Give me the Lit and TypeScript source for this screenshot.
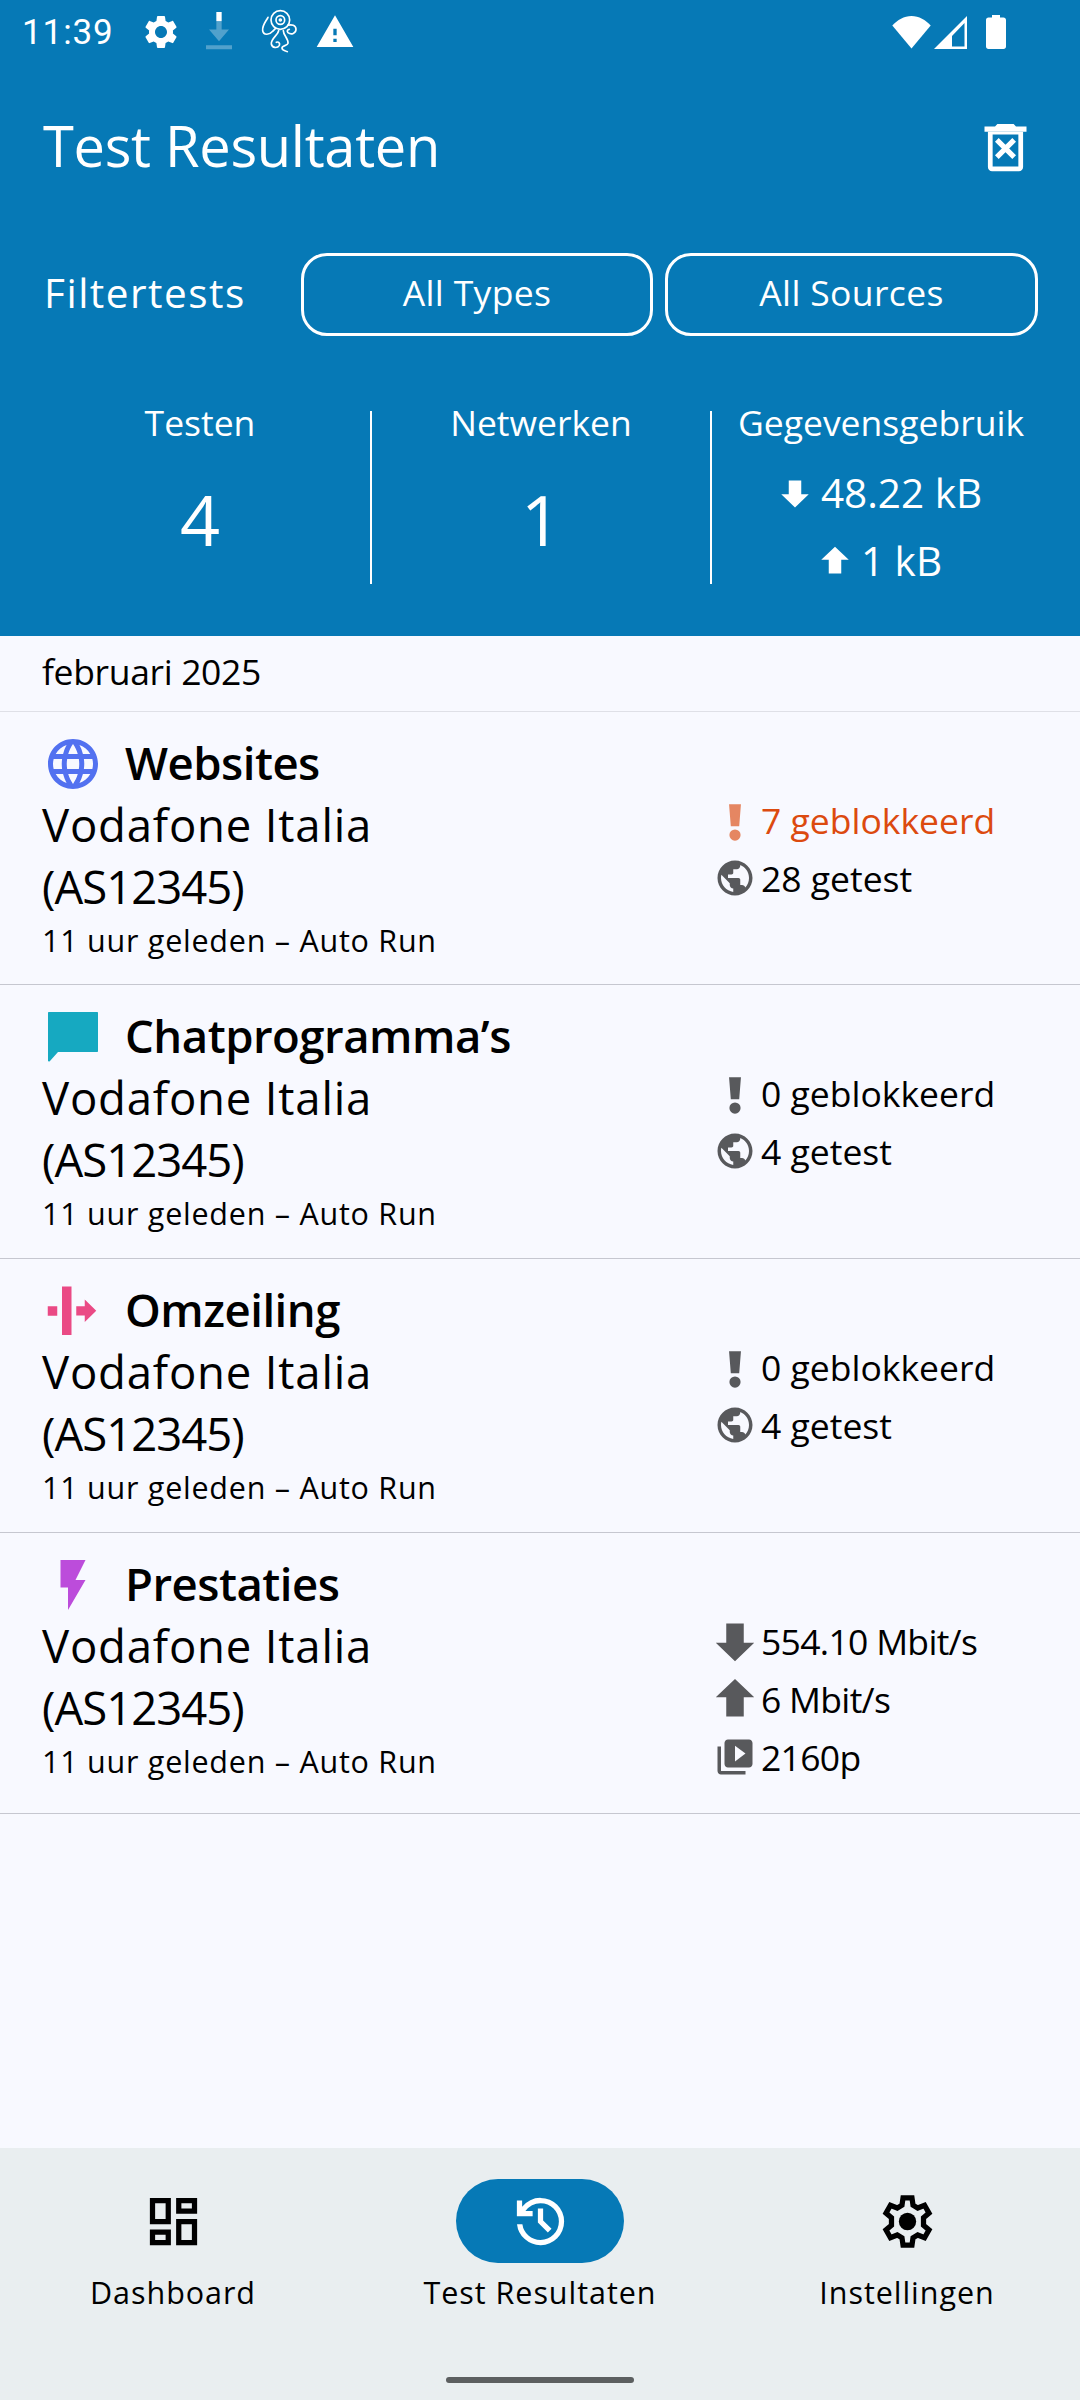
import { LitElement, html, css, svg } from 'lit';
import { customElement } from 'lit/decorators.js';

const P_GEAR = 'M19.14 12.94c.04-.3.06-.61.06-.94 0-.32-.02-.64-.07-.94l2.03-1.58c.18-.14.23-.41.12-.61l-1.92-3.32c-.12-.22-.37-.29-.59-.22l-2.39.96c-.5-.38-1.03-.7-1.62-.94l-.36-2.54c-.04-.24-.24-.41-.48-.41h-3.84c-.24 0-.43.17-.47.41l-.36 2.54c-.59.24-1.13.57-1.62.94l-2.39-.96c-.22-.08-.47 0-.59.22L2.74 8.87c-.12.21-.08.47.12.61l2.03 1.58c-.05.3-.09.63-.09.94s.02.64.07.94l-2.03 1.58c-.18.14-.23.41-.12.61l1.92 3.32c.12.22.37.29.59.22l2.39-.96c.5.38 1.03.7 1.62.94l.36 2.54c.05.24.24.41.48.41h3.84c.24 0 .44-.17.47-.41l.36-2.54c.59-.24 1.13-.56 1.62-.94l2.39.96c.22.08.47 0 .59-.22l1.92-3.32c.12-.22.07-.47-.12-.61l-2.01-1.58zM12 15.6c-1.98 0-3.6-1.62-3.6-3.6s1.62-3.6 3.6-3.6 3.6 1.62 3.6 3.6-1.62 3.6-3.6 3.6z';
const P_DASH = 'M19 5v2h-4V5h4M9 5v6H5V5h4m10 8v6h-4v-6h4M9 17v2H5v-2h4M21 3h-8v6h8V3zM11 3H3v10h8V3zm10 8h-8v10h8V11zm-10 4H3v6h8v-6z';
const P_HISTORY = 'M12 21q-3.45 0-6.01-2.29T3.05 13H5.1q.35 2.6 2.31 4.3T12 19q2.93 0 4.96-2.04T19 12t-2.04-4.96T12 5q-1.73 0-3.23.8T6.25 8H9v2H3V4h2v2.35q1.28-1.6 3.11-2.48T12 3q1.88 0 3.51.71t2.86 1.93 1.93 2.86T21 12t-.71 3.51-1.93 2.86-2.86 1.93T12 21zm2.8-4.8L11 12.4V7h2v4.6l3.2 3.2-1.4 1.4z';
const P_LANGUAGE = 'M11.99 2C6.47 2 2 6.48 2 12s4.47 10 9.99 10C17.52 22 22 17.52 22 12S17.52 2 11.99 2zm6.93 6h-2.95c-.32-1.25-.78-2.45-1.38-3.56 1.84.63 3.37 1.91 4.33 3.56zM12 4.04c.83 1.2 1.48 2.53 1.91 3.96h-3.82c.43-1.43 1.08-2.76 1.91-3.96zM4.26 14C4.1 13.36 4 12.69 4 12s.1-1.36.26-2h3.38c-.08.66-.14 1.32-.14 2 0 .68.06 1.34.14 2H4.26zm.82 2h2.95c.32 1.25.78 2.45 1.38 3.56-1.84-.63-3.37-1.9-4.33-3.56zm2.95-8H5.08c.96-1.66 2.49-2.93 4.33-3.56C8.81 5.55 8.35 6.75 8.03 8zM12 19.96c-.83-1.2-1.48-2.53-1.91-3.96h3.82c-.43 1.43-1.08 2.76-1.91 3.96zM14.34 14H9.66c-.09-.66-.16-1.32-.16-2 0-.68.07-1.35.16-2h4.68c.09.65.16 1.32.16 2 0 .68-.07 1.34-.16 2zm.25 5.56c.6-1.11 1.06-2.31 1.38-3.56h2.95c-.96 1.65-2.49 2.93-4.33 3.56zM16.36 14c.08-.66.14-1.32.14-2 0-.68-.06-1.34-.14-2h3.38c.16.64.26 1.31.26 2s-.1 1.36-.26 2h-3.38z';
const P_PUBLIC = 'M12 2C6.48 2 2 6.48 2 12s4.48 10 10 10 10-4.48 10-10S17.52 2 12 2zm-1 17.93c-3.95-.49-7-3.85-7-7.93 0-.62.08-1.21.21-1.79L9 15v1c0 1.1.9 2 2 2v1.93zm6.9-2.54c-.26-.81-1-1.39-1.9-1.39h-1v-3c0-.55-.45-1-1-1H8v-2h2c.55 0 1-.45 1-1V7h2c1.1 0 2-.9 2-2v-.41c2.93 1.19 5 4.06 5 7.41 0 2.08-.8 3.97-2.1 5.39z';
const P_VIDEO = 'M4 6H2v14c0 1.1.9 2 2 2h14v-2H4V6zm16-4H8c-1.1 0-2 .9-2 2v12c0 1.1.9 2 2 2h12c1.1 0 2-.9 2-2V4c0-1.1-.9-2-2-2zm-8 12.5v-9l6 4.5-6 4.5z';
const P_DOWN = 'M7 2h10v11h6L12 23.5 1 13h6z';
const P_UP = 'M7 22h10V11h6L12 .5 1 11h6z';
const P_BANG = 'M8.6 3h6.800l-1 12.600H9.600zM12 17.400a3.200 3.200 0 1 0 0 6.400 3.200 3.200 0 0 0 0-6.400z';

type Stat = { icon: string; text: string };
type Row = { title: string; kind: string; color: string; alert?: boolean; stats: Stat[] };

const blocked = (n: number) => ({ icon: P_BANG, text: `${n} geblokkeerd` });
const tested = (n: number) => ({ icon: P_PUBLIC, text: `${n} getest` });

const ROWS: Row[] = [
  { title: 'Websites', kind: 'web', color: '#5271f0', alert: true, stats: [blocked(7), tested(28)] },
  { title: 'Chatprogramma’s', kind: 'chat', color: '#16a9c1', stats: [blocked(0), tested(4)] },
  { title: 'Omzeiling', kind: 'circ', color: '#ea4a85', stats: [blocked(0), tested(4)] },
  {
    title: 'Prestaties', kind: 'perf', color: '#bc4cdb',
    stats: [
      { icon: P_DOWN, text: '554.10 Mbit/s' },
      { icon: P_UP, text: '6 Mbit/s' },
      { icon: P_VIDEO, text: '2160p' },
    ],
  },
];

const icon = (d: string, cls = '') =>
  html`<svg class=${cls} viewBox="0 0 24 24" fill="currentColor"><path d=${d}></path></svg>`;

const TYPE_ICONS: Record<string, ReturnType<typeof svg>> = {
  web: svg`<path d=${P_LANGUAGE}></path>`,
  chat: svg`<path d="M2.300 2h19.400c.2 0 .3.1.3.3v15.400c0 .2-.1.3-.3.3H6l-3.300 3.700c-.3.3-.7.1-.7-.2V2.300c0-.2.1-.3.3-.3z"></path>`,
  circ: svg`<path d="M1.900 10.100h3.800v3.800H1.900zM7.600 2.200h3.800v19.400H7.600zM13.300 10.100h3.400V7.400l4.600 4.500-4.600 4.500v-2.600h-3.400z"></path>`,
  perf: svg`<path d="M7 2v11h3v9l7-12h-4l4-8z"></path>`,
};

const GEAR_OUTLINE = html`
  <svg viewBox="0 0 24 24" fill="none" stroke="currentColor" stroke-width="2">
    <polygon points="10.300,3 13.700,3 14.100,5.800 15.900,6.850 18.500,5.800 20.200,8.800 18.100,10.600 18.100,13.400 20.200,15.200 18.500,18.200 15.900,17.150 14.100,18.200 13.700,21 10.300,21 9.900,18.200 8.100,17.150 5.500,18.200 3.800,15.200 5.900,13.400 5.900,10.600 3.800,8.800 5.500,5.800 8.100,6.850 9.900,5.800"></polygon>
    <circle cx="12" cy="12" r="3.300" fill="currentColor" stroke="none"></circle>
  </svg>`;

@customElement('app-root')
export class AppRoot extends LitElement {
  static styles = css`
    :host {
      display: flex;
      flex-direction: column;
      width: 1080px;
      height: 2400px;
      overflow: hidden;
      background: #f8f9ff;
      font-family: "Open Sans", "Noto Sans", sans-serif;
      color: #000;
    }

    svg { display: block; flex-shrink: 0; }

    /* === Header === */
    .header { background: #0679b6; color: #fff; height: 636px; box-sizing: border-box; flex-shrink: 0; }

    .status {
      display: flex;
      align-items: center;
      height: 64px;
      padding: 0 74px 0 22px;
      gap: 18px;
    }
    .status svg { width: 40px; height: 40px; }
    .time {
      font-family: Roboto, sans-serif;
      font-size: 35px;
      width: 90px;
      margin-right: 11px;
      letter-spacing: 0.9px;
    }
    .status .octo { width: 40px; height: 50px; margin-top: -4px; }
    .status-right { display: flex; align-items: center; margin-left: auto; }
    .status .wifi { width: 39px; height: 34px; }
    .status .sig { width: 33px; height: 33px; margin-left: 3px; }
    .status .bat { width: 20px; height: 34px; margin-left: 19px; }

    .title-row {
      display: flex;
      align-items: center;
      justify-content: space-between;
      height: 164px;
      padding: 0 43px 0 43px;
      box-sizing: border-box;
    }
    .title { font-size: 56px; letter-spacing: -0.3px; margin-top: -2px; }
    .trash { width: 63px; height: 63px; margin-top: 2px; }

    .filter {
      display: flex;
      align-items: center;
      height: 83px;
      margin-top: 25px;
      padding: 0 42px 0 44px;
    }
    .filter-label { font-size: 40.5px; width: 257px; letter-spacing: 1.5px; padding-bottom: 4px; }
    .pill {
      display: flex;
      align-items: center;
      justify-content: center;
      box-sizing: border-box;
      height: 83px;
      padding-bottom: 6px;
      border: 3px solid #fff;
      border-radius: 26px;
      font-size: 35.5px;
      letter-spacing: 0.35px;
    }
    .pill.types { width: 352px; margin-right: 12px; }
    .pill.sources { width: 373px; }

    .stats {
      display: grid;
      grid-template-columns: repeat(3, 340px);
      grid-template-rows: 173px;
      margin: 75px 30px 0;
    }
    .stat {
      display: flex;
      flex-direction: column;
      align-items: center;
      min-height: 0;
      border-left: 2px solid #fff;
    }
    .stat:first-child { border-left: 0; }
    .stat-label { font-size: 35.5px; line-height: 32px; margin-top: -5px; }
    .stat-num { font-size: 70px; line-height: 72px; margin-top: 45px; }
    .data {
      display: flex;
      align-items: center;
      flex-shrink: 0;
      gap: 11px;
      font-size: 40.5px;
      line-height: 68px;
    }
    .data svg { width: 30px; height: 30px; }
    .data.first { margin-top: 21px; }

    /* === List === */
    .month {
      height: 75px;
      line-height: 71px;
      padding-left: 42px;
      font-size: 35.5px;
      letter-spacing: -0.35px;
      border-bottom: 1px solid #dfe0e7;
      flex-shrink: 0;
    }
    .list { flex: 1; }
    .row {
      display: flex;
      justify-content: space-between;
      padding: 0 42px;
      min-height: 274px;
      box-sizing: border-box;
      border-bottom: 1.5px solid #c6c7d0;
    }
    .row:first-child { min-height: 273px; }
    .row-head { display: flex; align-items: center; height: 60px; margin-top: 22px; }
    .row-head svg { width: 60px; height: 60px; margin-left: 1px; }
    .row-title { font-size: 45.5px; font-weight: 600; margin: -4px 0 0 22px; letter-spacing: -0.5px; }
    .net { font-size: 45.5px; line-height: 62px; width: 400px; margin-top: -1px; letter-spacing: 0.8px; }
    .asn { letter-spacing: -1px; }
    .ago { font-size: 30.5px; line-height: 40px; letter-spacing: 0.75px; margin-top: 3px; }
    .right { width: 324px; padding: 79px 0 26.5px; }
    .line { display: flex; align-items: center; height: 58px; font-size: 35.5px; gap: 5px; }
    .line svg { width: 42px; height: 42px; color: #58595c; }
    .right.perf .line { letter-spacing: -0.7px; }
    .right.alert .line:first-child { color: #dc4a0f; }
    .right.alert .line:first-child svg { color: #dc4a0f; opacity: 0.65; }

    /* === Bottom nav === */
    .nav { background: #e9eef0; height: 252px; flex-shrink: 0; }
    .tabs { display: flex; justify-content: space-between; padding: 31px 73px 0; }
    .tab { display: flex; flex-direction: column; align-items: center; width: 240px; }
    .tab:first-child { margin-left: -20px; }
    .tab:last-child { margin-right: -20px; }
    .tab-icon {
      display: flex;
      align-items: center;
      justify-content: center;
      width: 168px;
      height: 84px;
      border-radius: 42px;
    }
    .tab-icon svg { width: 63px; height: 63px; }
    .tab.active .tab-icon { background: #0679b6; color: #fff; }
    .tab-label { font-size: 30.5px; line-height: 40px; margin-top: 9px; letter-spacing: 0.95px; }
    .home {
      width: 188px;
      height: 6px;
      margin: 65px auto 0;
      border-radius: 3px;
      background: #5c5f60;
    }
  `;

  private renderRow(r: Row) {
    const cls = `right ${r.alert ? 'alert' : ''} ${r.kind === 'perf' ? 'perf' : ''}`;
    return html`
      <div class="row">
        <div>
          <div class="row-head">
            <svg viewBox="0 0 24 24" fill=${r.color}>${TYPE_ICONS[r.kind]}</svg>
            <div class="row-title">${r.title}</div>
          </div>
          <div class="net">Vodafone Italia <span class="asn">(AS12345)</span></div>
          <div class="ago">11 uur geleden – Auto Run</div>
        </div>
        <div class=${cls}>
          ${r.stats.map((s) => html`<div class="line">${icon(s.icon)}<span>${s.text}</span></div>`)}
        </div>
      </div>
    `;
  }

  render() {
    return html`
      <div class="header">
        <div class="status">
          <span class="time">11:39</span>
          ${icon(P_GEAR)}
          <svg viewBox="0 0 24 24" fill="#fff">
            <path d="M10.400 -1h3.200v6.500h-3.200z"></path>
            <path opacity=".3" d="M10.400 5.500h3.200v5h4.400L12 17.600 6 10.500h4.400zM4.200 20h15.600v2.400H4.200z"></path>
          </svg>
          <svg class="octo" viewBox="45 15 120 150" fill="none" stroke="#fff" stroke-width="5" stroke-linecap="round">
            <circle cx="115" cy="60" r="28"></circle>
            <circle cx="115" cy="60" r="13"></circle>
            <circle cx="115" cy="60" r="3"></circle>
            <path d="M78 52c-6 12-18 24-16 40 2 14 20 14 30 2l8-8"></path>
            <path d="M138 76c10-4 24 0 24 12 0 12-14 18-24 10-4-4-2-10 4-10"></path>
            <path d="M110 92c-2 14-24 24-22 40 2 12 18 14 24 4 3-7-3-12-9-9"></path>
            <path d="M124 92c0 14 16 24 14 38-2 8-18 6-18 14 0 8 10 8 16 11"></path>
          </svg>
          ${icon('M1 21h22L12 2 1 21zm12-3h-2v-2h2v2zm0-4h-2v-4h2v4z')}
          <div class="status-right">
            <svg class="wifi" viewBox="0 0 39 34" fill="#fff"><path d="M19.500 33.500L.3 10.500C5.500 5 12 1 19.500 1s14 4 19.200 9.500z"></path></svg>
            <svg class="sig" viewBox="0 0 33 33" fill="#fff">
              <path fill-rule="evenodd" d="M33 0v33H0zM30.500 7 18 20v10.500h12.500z"></path>
            </svg>
            <svg class="bat" viewBox="0 0 20 34" fill="#fff">
              <path d="M6 0h8v2.500h3.500c1.400 0 2.500 1 2.500 2.500v26.500c0 1.400-1 2.500-2.500 2.500h-15C1 34 0 33 0 31.500V5c0-1.500 1-2.500 2.500-2.500H6z"></path>
            </svg>
          </div>
        </div>

        <div class="title-row">
          <div class="title">Test Resultaten</div>
          <svg class="trash" viewBox="0 0 24 24" fill="#fff">
            <path d="M8.900 3h6.200l.9 1H20v2H4V4h4z"></path>
            <path fill-rule="evenodd" d="M5.300 6h13.400v13.400c0 .9-.7 1.600-1.600 1.600H6.900c-.9 0-1.600-.7-1.600-1.600zM7.100 7v12.200h9.800V7z"></path>
            <path d="M8.700 9.100l6.600 6.600M15.300 9.100l-6.600 6.600" stroke="#fff" stroke-width="2"></path>
          </svg>
        </div>

        <div class="filter">
          <div class="filter-label">Filtertests</div>
          <div class="pill types">All Types</div>
          <div class="pill sources">All Sources</div>
        </div>

        <div class="stats">
          <div class="stat">
            <div class="stat-label">Testen</div>
            <div class="stat-num">4</div>
          </div>
          <div class="stat">
            <div class="stat-label">Netwerken</div>
            <div class="stat-num">1</div>
          </div>
          <div class="stat">
            <div class="stat-label">Gegevensgebruik</div>
            <div class="data first">${icon(P_DOWN)}<span>48.22 kB</span></div>
            <div class="data">${icon(P_UP)}<span>1 kB</span></div>
          </div>
        </div>
      </div>

      <div class="month">februari 2025</div>
      <div class="list">${ROWS.map((r) => this.renderRow(r))}</div>

      <div class="nav">
        <div class="tabs">
          <div class="tab"><div class="tab-icon">${icon(P_DASH)}</div><div class="tab-label">Dashboard</div></div>
          <div class="tab active"><div class="tab-icon">${icon(P_HISTORY)}</div><div class="tab-label">Test Resultaten</div></div>
          <div class="tab"><div class="tab-icon">${GEAR_OUTLINE}</div><div class="tab-label">Instellingen</div></div>
        </div>
        <div class="home"></div>
      </div>
    `;
  }
}
